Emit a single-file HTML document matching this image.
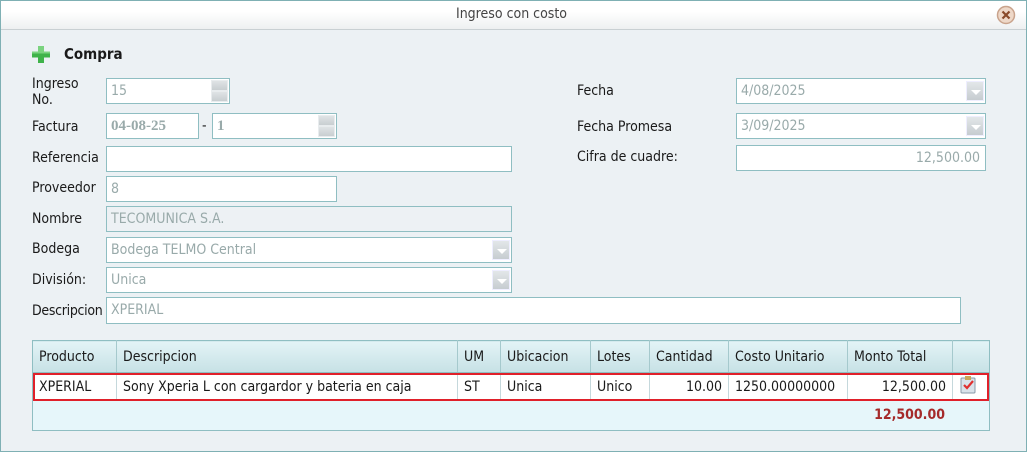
<!DOCTYPE html>
<html><head><meta charset="utf-8"><style>
*{box-sizing:border-box;margin:0;padding:0}
body{width:1027px;height:452px;overflow:hidden;font-family:"DejaVu Sans Condensed","Liberation Sans",sans-serif;font-size:14px;color:#1a1a1a;background:#ecf1f4}
.win{position:absolute;left:0;top:0;width:1027px;height:452px;background:#ecf1f4}
.frame{position:absolute;left:0;top:0;width:1027px;height:452px;border:1px solid #7fb0b4;pointer-events:none}
.title{position:absolute;left:0;top:0;width:1027px;height:30px;background:linear-gradient(#fff 0,#fff 40%,#eef0f1 100%);border-bottom:1px solid #c9d0d3;text-align:center;line-height:28px;color:#444;padding-right:4px}
.a{position:absolute;white-space:nowrap}
.lbl{position:absolute;white-space:nowrap;line-height:16px}
.in{position:absolute;border:1px solid #8fbec2;background:#fff;color:#9aa;padding-left:4px;line-height:24px;white-space:nowrap;overflow:hidden}
.dis{background:#edf1f4}
.spin{position:absolute;right:1px;top:1px;width:17px;height:22px}
.spin div{height:11px;background:linear-gradient(#dfe3e5,#c8ced1);border:1px solid #e8ecee}
.dd{position:absolute;right:1px;top:2px;width:18px;height:20px;background:linear-gradient(#e3e7e9,#c6ccd0);border:1px solid #eef;}
.dd:after{content:"";position:absolute;left:4px;top:8px;border-left:5px solid transparent;border-right:5px solid transparent;border-top:5px solid #fff}
table{position:absolute;left:32px;top:340px;width:958px;border-collapse:collapse;border:1px solid #8fbec2}
th{height:32px;font-weight:normal;text-align:left;padding-left:6px;background:linear-gradient(#e3f3f6,#c6e1e5);border-right:1px solid #a5c9cd;border-bottom:1px solid #8fbec2}
td{height:28px;background:#fff;padding:0 6px;border-right:1px solid #c5d8dc}
.r{text-align:right}
tr.f td{height:30px;background:#e6f6fa;border-right:none}
</style></head><body>
<div class="win">
<div class="title">Ingreso con costo</div>
<svg class="a" style="left:996px;top:5px" width="20" height="20" viewBox="0 0 20 20"><circle cx="10" cy="10" r="8.5" fill="#eed8c8" stroke="#c9a38c" stroke-width="1.5"/><path d="M6.5 6.5L13.5 13.5M13.5 6.5L6.5 13.5" stroke="#8a4a2a" stroke-width="2.2"/></svg>
<svg class="a" style="left:32px;top:46px" width="18" height="17" viewBox="0 0 18 17"><path d="M6 0h6v5.5h6v6h-6V17H6v-5.5H0v-6h6z" fill="#3fb34a"/><path d="M6 0h6v5.5h6v2H0v-2h6z" fill="#7ad37f"/></svg>
<div class="a" style="left:64px;top:45px;font-weight:bold;font-size:15px">Compra</div>

<div class="lbl" style="left:32px;top:76px">Ingreso<br>No.</div>
<div class="in" style="left:106px;top:78px;width:124px;height:26px">15<div class="spin"><div></div><div></div></div></div>
<div class="lbl" style="left:32px;top:119px">Factura</div>
<div class="in" style="left:106px;top:113px;width:93px;height:26px;font-family:'Liberation Serif',serif;font-weight:bold;font-size:15px">04-08-25</div>
<div class="a" style="left:202px;top:118px">-</div>
<div class="in" style="left:212px;top:113px;width:125px;height:26px;font-family:'Liberation Serif',serif;font-weight:bold;font-size:15px">1<div class="spin"><div></div><div></div></div></div>
<div class="lbl" style="left:32px;top:150px">Referencia</div>
<div class="in" style="left:106px;top:146px;width:406px;height:26px"></div>
<div class="lbl" style="left:32px;top:180px">Proveedor</div>
<div class="in" style="left:106px;top:176px;width:231px;height:26px">8</div>
<div class="lbl" style="left:32px;top:211px">Nombre</div>
<div class="in dis" style="left:106px;top:206px;width:406px;height:26px">TECOMUNICA S.A.</div>
<div class="lbl" style="left:32px;top:241px">Bodega</div>
<div class="in" style="left:106px;top:237px;width:406px;height:26px">Bodega TELMO Central<div class="dd"></div></div>
<div class="lbl" style="left:32px;top:272px">División:</div>
<div class="in" style="left:106px;top:267px;width:406px;height:26px">Unica<div class="dd"></div></div>
<div class="lbl" style="left:32px;top:303px;letter-spacing:-0.3px">Descripcion</div>
<div class="in" style="left:106px;top:297px;width:855px;height:27px">XPERIAL</div>

<div class="lbl" style="left:577px;top:83px">Fecha</div>
<div class="in" style="left:736px;top:78px;width:250px;height:26px">4/08/2025<div class="dd"></div></div>
<div class="lbl" style="left:577px;top:119px">Fecha Promesa</div>
<div class="in" style="left:736px;top:113px;width:250px;height:26px">3/09/2025<div class="dd"></div></div>
<div class="lbl" style="left:577px;top:149px">Cifra de cuadre:</div>
<div class="in" style="left:736px;top:145px;width:250px;height:26px;text-align:right;padding-right:5px">12,500.00</div>

<table>
<tr><th style="width:84px">Producto</th><th style="width:341px">Descripcion</th><th style="width:43px">UM</th><th style="width:90px">Ubicacion</th><th style="width:59px">Lotes</th><th style="width:79px">Cantidad</th><th style="width:119px">Costo Unitario</th><th style="width:105px">Monto Total</th><th style="border-right:none"></th></tr>
<tr><td>XPERIAL</td><td>Sony Xperia L con cargardor y bateria en caja</td><td>ST</td><td>Unica</td><td>Unico</td><td class="r">10.00</td><td>1250.00000000</td><td class="r">12,500.00</td><td style="border-right:none"><svg width="18" height="19" viewBox="0 0 18 19"><rect x="2" y="3" width="14" height="15" rx="1" fill="#d9e2ea" stroke="#8899a8"/><rect x="6" y="1" width="6" height="4" fill="#c9a85a"/><path d="M5 10l3 3 6-7" stroke="#e03030" stroke-width="2.2" fill="none"/></svg></td></tr>
<tr class="f"><td colspan="9" class="r" style="color:#a52a2a;font-weight:bold;font-size:14px;padding-right:44px">12,500.00</td></tr>
</table>
<div class="a" style="left:33px;top:373px;width:956px;height:28px;border:2px solid #e0202a"></div>
</div>
<div class="frame"></div>
</body></html>
